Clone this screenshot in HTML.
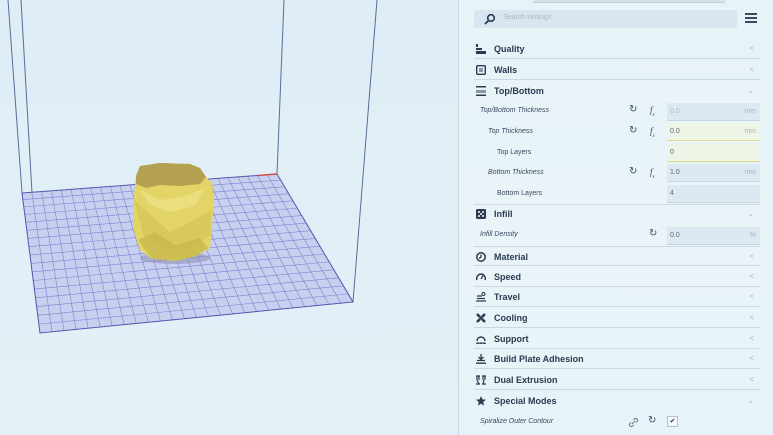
<!DOCTYPE html>
<html><head><meta charset="utf-8"><style>
*{margin:0;padding:0;box-sizing:border-box}
body{width:773px;height:435px;overflow:hidden;background:#e2eef5;font-family:"Liberation Sans",sans-serif;position:relative}
#vp{position:absolute;left:0;top:0;width:458px;height:435px;background:linear-gradient(180deg,#deedf6,#e4f0f6)}
#panel{position:absolute;left:458px;top:0;width:315px;height:435px;background:linear-gradient(180deg,#e8f3f8,#eaf4f8 60%,#e6f3f8);border-left:1px solid #c8d8e2}
.abs{position:absolute}
.hdr{position:absolute;left:474px;width:286px;height:20px;border-bottom:1px solid #c9d9e3;font-weight:bold;font-size:9px;color:#2a3a50;line-height:20px;padding-left:20px}
.hdr .ic{position:absolute;left:2px;top:5px;width:10px;height:10px}
.hdr .ch{position:absolute;right:6px;top:0;color:#aab6c0;font-weight:normal;font-size:8px}
.set{position:absolute;font-size:7px;font-style:italic;color:#3a4a60;line-height:20px}
.inp{position:absolute;left:667px;width:93px;height:18px;background:#dce9f2;border-bottom:1px solid #c6d6e0;font-size:7px;color:#56687a;line-height:18px;padding-left:3px}
.inp.y{background:#eef4e6;border-bottom:1px solid #e2d98a}
.inp span{position:absolute;right:4px;color:#a8b4be}
.rs{position:absolute;font-size:10px;color:#3a4a60}
.fx{position:absolute;font-size:9px;font-style:italic;font-family:"Liberation Serif",serif;color:#3a4a60}
</style></head><body>
<div id="vp"></div>
<svg class="abs" style="left:0;top:0" width="458" height="435" id="sv">
<g stroke="#5a6d9a" stroke-width="1" fill="none">
<line x1="8" y1="0" x2="22" y2="193"/>
<line x1="21" y1="0" x2="40" y2="333"/>
<line x1="284" y1="0" x2="277" y2="174"/>
<line x1="377" y1="0" x2="353" y2="302"/>
</g>
<polygon points="22,193 277,174 353,302 40,333" fill="#c8d0f0"/>
<g id="grid" stroke="#7c84d0" stroke-width="0.6"></g>
<polygon points="22,193 277,174 353,302 40,333" fill="none" stroke="#4d58b0" stroke-width="1"/>
<line x1="258" y1="175.5" x2="277" y2="174" stroke="#d05050" stroke-width="1.5"/>
<ellipse cx="175" cy="258" rx="35" ry="6" fill="#8e92b8" opacity="0.6"/>
<path d="M136,176 L140,166 L160,163 L190,164 L200,168 L206,177 L212,183 L214,200 L212,225 L210,248 L196,256 L176,261 L152,259 L140,250 L134,232 L133,205 Z" fill="#e2d467"/>
<path d="M136,176 L140,166 L160,163 L190,164 L200,168 L206,177 L200,184 L180,186 L160,185 L146,188 L136,184 Z" fill="#b3a051"/>
<path d="M134,200 L150,214 L170,232 L190,222 L212,210 L210,235 L190,248 L165,250 L145,240 Z" fill="#d4c55a" opacity="0.8"/>
<path d="M140,190 L160,200 L185,196 L205,188 L195,206 L170,212 L150,205 Z" fill="#efe38a" opacity="0.7"/>
<path d="M138,240 L155,232 L175,245 L200,238 L208,248 L196,256 L176,261 L152,259 Z" fill="#c9b94d" opacity="0.8"/>
</svg>
<script>
(function(){var g=document.getElementById('grid');var A=[22,193],B=[277,174],C=[353,302],D=[40,333];
function P(u,v){var tx=A[0]+(B[0]-A[0])*u,ty=A[1]+(B[1]-A[1])*u,bx=D[0]+(C[0]-D[0])*u,by=D[1]+(C[1]-D[1])*u;return[tx+(bx-tx)*v,ty+(by-ty)*v]}
function L(p,q){var l=document.createElementNS('http://www.w3.org/2000/svg','line');l.setAttribute('x1',p[0]);l.setAttribute('y1',p[1]);l.setAttribute('x2',q[0]);l.setAttribute('y2',q[1]);g.appendChild(l)}
var N=26,M=17;for(var i=1;i<N;i++)L(P(i/N,0),P(i/N,1));for(var j=1;j<M;j++){var v=Math.pow(j/M,1.08);L(P(0,v),P(1,v))}})();
</script>
<div id="panel"></div>
<div class="abs" style="left:533px;top:0;width:192px;height:3px;background:#d4e2ea;border-bottom:1px solid #c0d0da"></div>
<div class="abs" style="left:474px;top:10px;width:263px;height:18px;background:#d8e6ef;border-radius:2px"></div>
<svg class="abs" style="left:484px;top:13px" width="12" height="12"><circle cx="7" cy="5" r="3.3" fill="none" stroke="#2a3a50" stroke-width="1.6"/><line x1="4.5" y1="7.5" x2="1" y2="11" stroke="#2a3a50" stroke-width="1.8"/></svg>
<div class="abs" style="left:503px;top:14px;font-size:7px;color:#aab8c4">Search settings</div>
<div class="abs" style="left:745px;top:13px;width:12px;height:2px;background:#3a4a60;box-shadow:0 4px 0 #3a4a60,0 8px 0 #3a4a60"></div>

<div class="hdr" style="top:39px"><svg class="ic"><rect x="0" y="0" width="2" height="3" fill="#2a3a50"/><rect x="0" y="4" width="6" height="2" fill="#2a3a50"/><rect x="0" y="7" width="10" height="3" fill="#2a3a50"/></svg>Quality<span class="ch">&lt;</span></div>
<div class="hdr" style="top:60px"><svg class="ic"><rect x="0.7" y="0.7" width="8.6" height="8.6" rx="1" fill="none" stroke="#2a3a50" stroke-width="1.4"/><rect x="3" y="3" width="4" height="4" fill="#8a96a6"/></svg>Walls<span class="ch">&lt;</span></div>
<div class="hdr" style="top:81px;border-bottom:none"><svg class="ic"><rect x="0" y="0" width="10" height="1.5" fill="#2a3a50"/><rect x="0" y="8.5" width="10" height="1.5" fill="#2a3a50"/><path d="M1 4v3M3 4v3M5 4v3M7 4v3M9 4v3" stroke="#2a3a50"/></svg>Top/Bottom<span class="ch">&#8964;</span></div>

<div class="set" style="left:480px;top:101px">Top/Bottom Thickness</div>
<div class="rs" style="left:629px;top:104px">&#8635;</div><div class="fx" style="left:650px;top:105px">f<sub style="font-size:5px">x</sub></div>
<div class="inp" style="top:103px;color:#aab6c0">0.0<span>mm</span></div>
<div class="set" style="left:488px;top:122px">Top Thickness</div>
<div class="rs" style="left:629px;top:125px">&#8635;</div><div class="fx" style="left:650px;top:126px">f<sub style="font-size:5px">x</sub></div>
<div class="inp y" style="top:123px">0.0<span>mm</span></div>
<div class="set" style="left:497px;top:143px;font-style:normal">Top Layers</div>
<div class="inp y" style="top:144px">0</div>
<div class="set" style="left:488px;top:163px">Bottom Thickness</div>
<div class="rs" style="left:629px;top:166px">&#8635;</div><div class="fx" style="left:650px;top:167px">f<sub style="font-size:5px">x</sub></div>
<div class="inp" style="top:164px">1.0<span>mm</span></div>
<div class="set" style="left:497px;top:184px;font-style:normal">Bottom Layers</div>
<div class="inp" style="top:185px">4</div>
<div class="abs" style="left:474px;top:204px;width:286px;border-top:1px solid #c9d9e3"></div>

<div class="hdr" style="top:204px;border-bottom:none"><svg class="ic"><rect width="10" height="10" rx="1.5" fill="#2a3a50"/><circle cx="3" cy="3" r="1" fill="#fff"/><circle cx="7" cy="3" r="1" fill="#fff"/><circle cx="3" cy="7" r="1" fill="#fff"/><circle cx="7" cy="7" r="1" fill="#fff"/><circle cx="5" cy="5" r="1" fill="#fff"/></svg>Infill<span class="ch">&#8964;</span></div>
<div class="set" style="left:480px;top:225px">Infill Density</div>
<div class="rs" style="left:649px;top:228px">&#8635;</div>
<div class="inp" style="top:227px">0.0<span>%</span></div>

<div class="hdr" style="top:246px;border-top:1px solid #c9d9e3"><svg class="ic"><circle cx="5" cy="5" r="4.2" fill="none" stroke="#2a3a50" stroke-width="1.5"/><path d="M5 2.5V5L3 6.5" stroke="#2a3a50" fill="none" stroke-width="1.3"/></svg>Material<span class="ch">&lt;</span></div>
<div class="hdr" style="top:267px"><svg class="ic"><path d="M1 8A4.3 4.3 0 1 1 9 8" fill="none" stroke="#2a3a50" stroke-width="1.5"/><path d="M5 7L7 3.5" stroke="#2a3a50" stroke-width="1.3"/></svg>Speed<span class="ch">&lt;</span></div>
<div class="hdr" style="top:287px"><svg class="ic"><circle cx="7.5" cy="2" r="1.5" fill="none" stroke="#2a3a50"/><path d="M1 4H6M1 6.5H9M0 9H10" stroke="#2a3a50" stroke-width="1.3"/></svg>Travel<span class="ch">&lt;</span></div>
<div class="hdr" style="top:308px"><svg class="ic"><path d="M1 1L4 4M9 1L6 4M1 9L4 6M9 9L6 6" stroke="#2a3a50" stroke-width="2.5"/><circle cx="5" cy="5" r="1.5" fill="#2a3a50"/></svg>Cooling<span class="ch">&lt;</span></div>
<div class="hdr" style="top:329px"><svg class="ic"><path d="M1 7A4 4 0 1 1 9 7" fill="none" stroke="#2a3a50" stroke-width="1.4"/><path d="M0 9.3H10M2 8v2M5 8v2M8 8v2" stroke="#2a3a50"/></svg>Support<span class="ch">&lt;</span></div>
<div class="hdr" style="top:349px"><svg class="ic"><path d="M5 0V5M2.5 3L5 5.5L7.5 3M1 6.5H9M0 9.2H10" stroke="#2a3a50" stroke-width="1.3" fill="none"/></svg>Build Plate Adhesion<span class="ch">&lt;</span></div>
<div class="hdr" style="top:370px"><svg class="ic"><path d="M0 1H4M6 1H10M1 1V5M3 1V5M7 1V5M9 1V5M1 5L3 9M8 5L7 9M0 9H4M6 9H10" stroke="#2a3a50" stroke-width="1.2" fill="none"/></svg>Dual Extrusion<span class="ch">&lt;</span></div>
<div class="hdr" style="top:391px;border-bottom:none"><svg class="ic"><path d="M5 0L6.4 3.4L10 3.6L7.2 6L8.1 9.6L5 7.6L1.9 9.6L2.8 6L0 3.6L3.6 3.4Z" fill="#2a3a50"/></svg>Special Modes<span class="ch">&#8964;</span></div>
<div class="set" style="left:480px;top:412px">Spiralize Outer Contour</div>
<svg class="abs" style="left:628px;top:417px" width="11" height="11"><path d="M4 7L7 4M3 5.5L1.8 6.7A1.8 1.8 0 0 0 4.3 9.2L5.5 8M5.5 3L6.7 1.8A1.8 1.8 0 0 1 9.2 4.3L8 5.5" stroke="#6a7a8c" fill="none" stroke-width="1"/></svg>
<div class="rs" style="left:648px;top:415px">&#8635;</div>
<div class="abs" style="left:667px;top:416px;width:11px;height:11px;background:#f4f8fa;border:1px solid #b4c2cc;font-size:7px;line-height:9px;text-align:center;color:#2a3a50">&#10004;</div>
</body></html>
